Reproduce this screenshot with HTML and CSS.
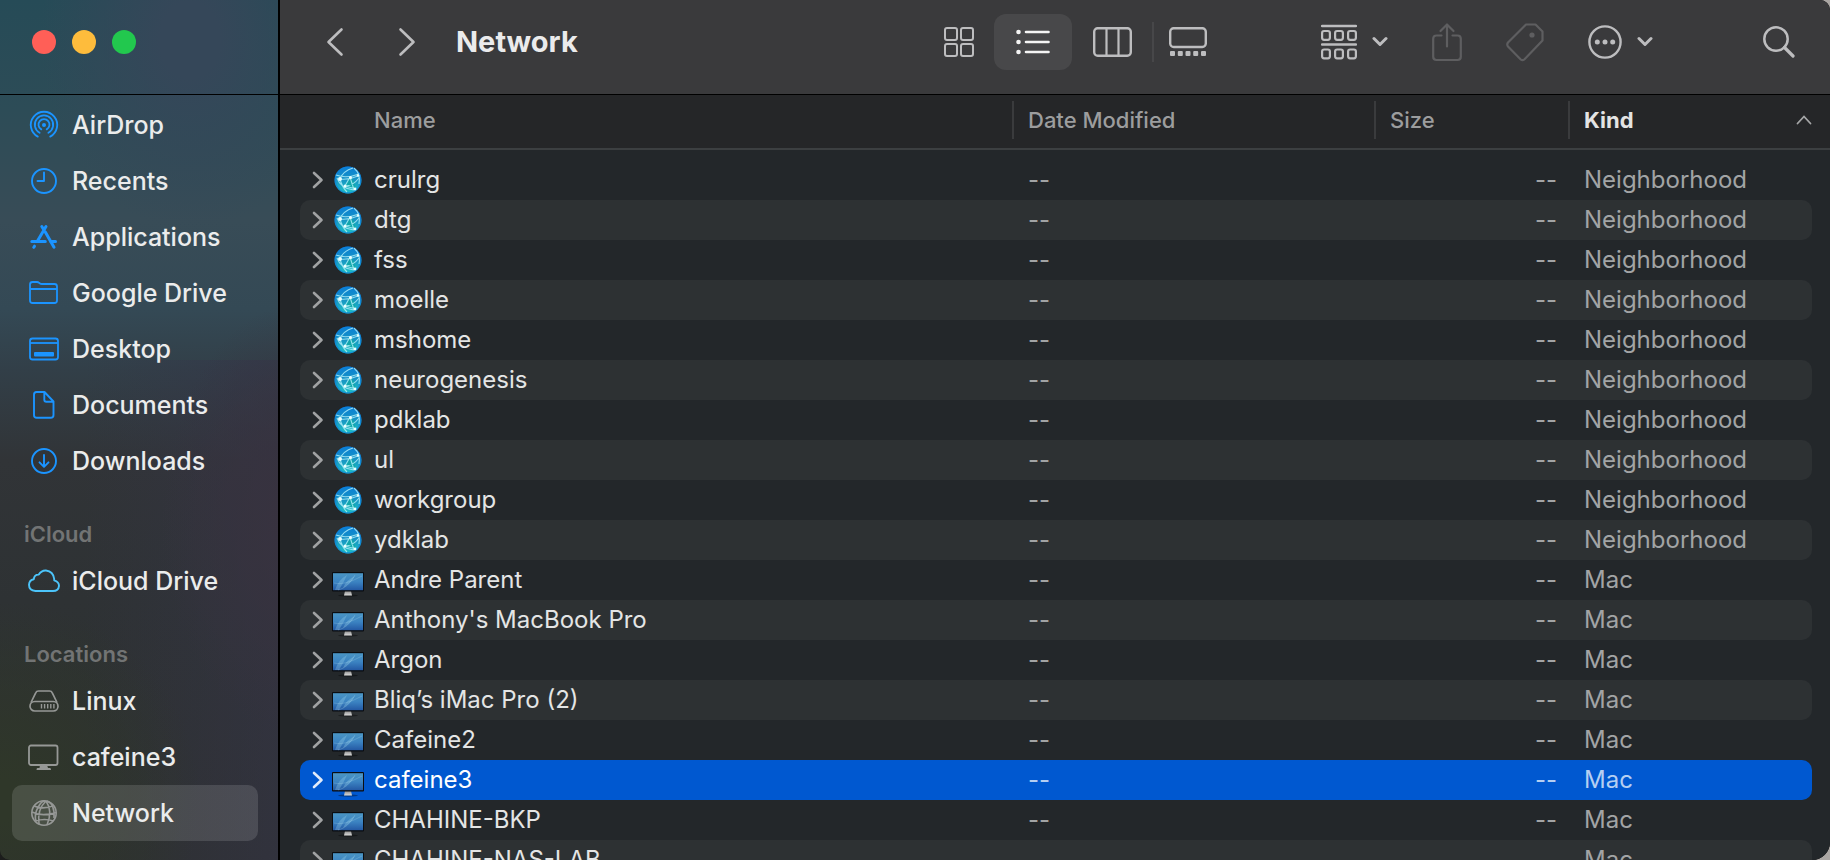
FILE: index.html
```html
<!DOCTYPE html>
<html lang="en">
<head>
<meta charset="utf-8">
<title>Network</title>
<link rel="stylesheet" href="styles.css">
</head>
<body>
<svg class="defs" width="0" height="0" aria-hidden="true">
  <defs>
    <linearGradient id="globe-fill" x1="0" y1="0" x2="0" y2="1"><stop offset="0" stop-color="#0a7fd6"/><stop offset=".5" stop-color="#1795c4"/><stop offset="1" stop-color="#1fc4c4"/></linearGradient>
    <linearGradient id="screen-fill" x1="0" y1="0" x2="0" y2="1"><stop offset="0" stop-color="#4a95c4"/><stop offset=".5" stop-color="#3c84c2"/><stop offset="1" stop-color="#2459a4"/></linearGradient>
    <linearGradient id="stand-fill" x1="0" y1="0" x2="0" y2="1"><stop offset="0" stop-color="#8d8d8d"/><stop offset="1" stop-color="#dcdcdc"/></linearGradient>
    <symbol id="chevron" viewBox="0 0 12 18"><path d="M2 2l7.5 7L2 16" fill="none" stroke="currentColor" stroke-width="2.6" stroke-linecap="round" stroke-linejoin="round"/></symbol>
    <symbol id="down" viewBox="0 0 16 11"><path d="M2 2.5l6 6 6-6" fill="none" stroke="currentColor" stroke-width="3" stroke-linecap="round" stroke-linejoin="round"/></symbol>
    <symbol id="globe" viewBox="0 0 28 28">
      <circle cx="14" cy="14" r="13.5" fill="url(#globe-fill)"/>
      <path d="M16 11l-5 9 11 3-2-8z" fill="#0fa9a4" opacity=".7"/>
      <circle cx="14" cy="14" r="12.8" fill="none" stroke="#0d7fe0" stroke-opacity=".7" stroke-width="1.2"/>
      <g fill="none" stroke="#b5f3fb" stroke-width="1.1" stroke-opacity=".8"><path d="M2 9q10 4 23-1M6 13q9 1 18-3M6 13Q9 5 19 2M6 13q2 8 7 13M16 11l-5 9 11 3M16 11l4 13M11 20q8 0 14-8M20 2q7 6 5 16M3 12q4 11 17 12"/></g>
      <g fill="#e8ffff"><circle cx="6" cy="13" r="2"/><circle cx="16.500" cy="11.500" r="1.500"/><circle cx="11" cy="20" r="1.500"/><circle cx="21" cy="23" r="1.400"/><circle cx="24" cy="9.500" r="1.200"/></g>
    </symbol>
    <symbol id="mac" viewBox="0 -9 32 34">
      <ellipse cx="16" cy="23.500" rx="10" ry="1.200" fill="#000" opacity=".35"/>
      <path d="M13 19h6l1 4.500h-8z" fill="url(#stand-fill)"/>
      <rect width="32" height="19.500" rx="1" fill="#0b0d10"/>
      <rect x="1" y="1.200" width="30" height="17" fill="url(#screen-fill)"/>
      <path d="M3 18Q6 8 15 3q-3 7-8 15zM11 16q3-8 12-12-4 7-12 12z" fill="#9fd8ee" opacity=".3"/>
      <path d="M2 11q10 3 28-7M6 18q10-2 17-15" fill="none" stroke="#b3e0f0" stroke-width=".8" opacity=".3"/>
    </symbol>
  </defs>
</svg>
<div class="window">
  <aside class="sidebar">
    <div class="lights">
      <button class="light close" aria-label="Close"></button>
      <button class="light minimize" aria-label="Minimize"></button>
      <button class="light expand" aria-label="Zoom"></button>
    </div>
    <nav class="places">
      <a class="place" href="#"><svg class="glyph" viewBox="0 0 32 32"><g fill="none" stroke="currentColor" stroke-width="1.8" stroke-linecap="round"><path d="M9.800 27.600a13.200 13.200 0 1 1 12.400 0"/><path d="M11.600 23.700a9.200 9.200 0 1 1 8.800 0"/><path d="M13.300 20.400a5.500 5.500 0 1 1 5.400 0"/></g><circle cx="16" cy="16" r="2" fill="currentColor"/></svg>AirDrop</a>
      <a class="place" href="#"><svg class="glyph" viewBox="0 0 32 32"><g fill="none" stroke="currentColor" stroke-width="1.900" stroke-linecap="round" stroke-linejoin="round"><circle cx="16" cy="16" r="12"/><path d="M16 7.500V16H9.500"/></g></svg>Recents</a>
      <a class="place" href="#"><svg class="glyph" viewBox="0 0 32 32"><g fill="none" stroke="currentColor" stroke-width="3" stroke-linecap="round" stroke-linejoin="round"><path d="M18 5.500L9.800 19.500M3.800 20.500h13.500M13.800 5.500l1.800 3M17.300 11l8.700 15.300M22.500 20.500h5M6.500 25.200l-.7 1.100"/></g></svg>Applications</a>
      <a class="place" href="#"><svg class="glyph" viewBox="0 0 32 32"><g fill="none" stroke="currentColor" stroke-width="1.800" stroke-linejoin="round"><path d="M2 7.500Q2 5 4.500 5H9q1.200 0 2 .8l1 .7q.6.500 1.800.5h12.700Q29 7 29 9.500v14q0 2.500-2.500 2.500h-22Q2 26 2 23.500zM2 12h27"/></g></svg>Google Drive</a>
      <a class="place" href="#"><svg class="glyph" viewBox="0 0 32 32"><rect x="2" y="5.500" width="28" height="21" rx="2.500" fill="none" stroke="currentColor" stroke-width="1.800"/><path d="M2 10h28" stroke="currentColor" stroke-width="1.800"/><rect x="6" y="19" width="20" height="4.500" rx="1" fill="currentColor"/></svg>Desktop</a>
      <a class="place" href="#"><svg class="glyph" viewBox="0 0 32 32"><path d="M8.500 3h8L25.500 12.500V26q0 2.800-2.800 2.800H8.700Q6 28.800 6 26V5.700Q6 3 8.500 3zM16.300 3v7.800q0 2 2 2h7" fill="none" stroke="currentColor" stroke-width="1.900" stroke-linejoin="round"/></svg>Documents</a>
      <a class="place" href="#"><svg class="glyph" viewBox="0 0 32 32"><g fill="none" stroke="currentColor" stroke-width="1.900" stroke-linecap="round" stroke-linejoin="round"><circle cx="16" cy="16" r="12"/><path d="M16 10v11.500M11.500 17.300l4.500 4.500 4.500-4.500"/></g></svg>Downloads</a>
      <h2 class="section">iCloud</h2>
      <a class="place cloud" href="#"><svg class="glyph" viewBox="0 0 32 32"><path d="M7.500 26Q1 25.500 1 19.800q.3-4.800 4.800-5.500Q6 9.500 10.800 9.600q2.700-4.400 7.200-4.100 7.200.8 8.200 8.500v1.300Q31 16.800 31 20.800 30.500 26 25 26z" fill="none" stroke="currentColor" stroke-width="1.900" stroke-linejoin="round"/></svg>iCloud Drive</a>
      <h2 class="section">Locations</h2>
      <a class="place device" href="#"><svg class="glyph" viewBox="0 0 32 32"><g fill="none" stroke="currentColor" stroke-width="1.700"><path d="M3 17.500L7.700 7.800Q8.500 6 10.500 6h11q2 0 2.800 1.800L29 17.500"/><rect x="2" y="16.500" width="28" height="9.500" rx="4.700"/><path d="M13.500 19v4.500M16.600 19v4.500M19.700 19v4.500M22.800 19v4.500M25.900 19v4.500" stroke-width="1.400"/></g></svg>Linux</a>
      <a class="place device" href="#"><svg class="glyph" viewBox="0 0 32 32"><rect x="1" y="4.500" width="28.500" height="19.500" rx="2" fill="none" stroke="currentColor" stroke-width="1.800"/><path d="M12 24h7l1 3h2q1 0 1 2H8.500q0-2 1-2h2z" fill="currentColor"/></svg>cafeine3</a>
      <a class="place device current" href="#" aria-current="page"><svg class="glyph" viewBox="0 0 32 32"><g fill="none" stroke="currentColor" stroke-width="1.600"><circle cx="16" cy="16" r="12.200"/><path d="M18 4Q9 12 11 27.500M18 4q7 10 1 24M17 4q-3-1-7 6.500Q6 17 8 24M19 4q8 3 7 17M6 9q9 4 20-.5M4 15q10 5 24 .5M7.500 24q9-3 18 0"/></g></svg>Network</a>
    </nav>
  </aside>
  <main class="main">
    <header class="toolbar">
      <div class="history">
        <button class="tool" aria-label="Back"><svg width="18" height="30" viewBox="0 0 18 30"><path d="M15.500 2.500L2.500 15l13 12.500" fill="none" stroke="currentColor" stroke-width="2.600" stroke-linecap="round" stroke-linejoin="round"/></svg></button>
        <button class="tool" aria-label="Forward"><svg width="18" height="30" viewBox="0 0 18 30"><path d="M2.500 2.500L15.500 15l-13 12.500" fill="none" stroke="currentColor" stroke-width="2.600" stroke-linecap="round" stroke-linejoin="round"/></svg></button>
      </div>
      <h1 class="title">Network</h1>
      <div class="views">
        <button class="view icons" aria-label="Icons"><svg width="30" height="30" viewBox="0 0 30 30"><g fill="none" stroke="currentColor" stroke-width="2"><rect x="1" y="1" width="12" height="12" rx="2"/><rect x="17" y="1" width="12" height="12" rx="2"/><rect x="1" y="17" width="12" height="12" rx="2"/><rect x="17" y="17" width="12" height="12" rx="2"/></g></svg></button>
        <button class="view active" aria-label="List" aria-pressed="true"><svg width="34" height="26" viewBox="0 0 34 26"><g fill="currentColor"><circle cx="2.500" cy="3" r="2.300"/><circle cx="2.500" cy="13" r="2.300"/><circle cx="2.500" cy="23" r="2.300"/></g><path d="M10 3h22.500M10 13h22.500M10 23h22.500" stroke="currentColor" stroke-width="2.600" stroke-linecap="round"/></svg></button>
        <button class="view" aria-label="Columns"><svg width="39" height="30" viewBox="0 0 39 30"><rect x="1.200" y="1.200" width="36.600" height="27.600" rx="3.500" fill="none" stroke="currentColor" stroke-width="2.400"/><path d="M13.500 1v28M25.500 1v28" stroke="currentColor" stroke-width="2.200"/></svg></button>
        <button class="view gallery" aria-label="Gallery"><svg width="38" height="30" viewBox="0 0 38 30"><rect x="1.200" y="1.200" width="35.600" height="18.800" rx="3.500" fill="none" stroke="currentColor" stroke-width="2.400"/><g fill="currentColor"><rect x="1" y="24" width="5" height="5" rx="1"/><rect x="8.800" y="24" width="5" height="5" rx="1"/><rect x="16.500" y="24" width="5" height="5" rx="1"/><rect x="24.200" y="24" width="5" height="5" rx="1"/><rect x="32" y="24" width="5" height="5" rx="1"/></g></svg></button>
      </div>
      <div class="actions">
        <button class="tool menu" aria-label="Group"><svg width="36" height="36" viewBox="0 0 36 36"><path d="M1 2h34M1 20.500h34" stroke="currentColor" stroke-width="2.400" stroke-linecap="round"/><g fill="none" stroke="currentColor" stroke-width="2.200"><rect x="1.100" y="7" width="7.800" height="8.800" rx="2"/><rect x="14.100" y="7" width="7.800" height="8.800" rx="2"/><rect x="27.100" y="7" width="7.800" height="8.800" rx="2"/><rect x="1.100" y="25.500" width="7.800" height="8.800" rx="2"/><rect x="14.100" y="25.500" width="7.800" height="8.800" rx="2"/><rect x="27.100" y="25.500" width="7.800" height="8.800" rx="2"/></g></svg><svg width="16" height="11"><use href="#down"/></svg></button>
        <button class="tool" aria-label="Share" disabled><svg width="30" height="40" viewBox="0 0 30 40"><g fill="none" stroke="currentColor" stroke-width="2.200" stroke-linecap="round" stroke-linejoin="round"><path d="M9.500 13.500h-5q-3.300 0-3.300 3.300v18q0 3.200 3.300 3.200h21q3.300 0 3.300-3.200v-18q0-3.300-3.300-3.300h-5M15 24.500V3M8.500 9L15 2.500 21.500 9"/></g></svg></button>
        <button class="tool" aria-label="Tags" disabled><svg width="38" height="40" viewBox="0 0 38 40"><path d="M20 2.500h9.500L36.500 9.500v9L18.500 37.300q-2 1.800-4 0L2 24.500q-1.500-2 0-4z" fill="none" stroke="currentColor" stroke-width="2.200" stroke-linejoin="round"/><circle cx="26" cy="13" r="2.600" fill="currentColor"/></svg></button>
        <button class="tool menu" aria-label="More"><svg width="34" height="34" viewBox="0 0 34 34"><circle cx="17" cy="17" r="15.600" fill="none" stroke="currentColor" stroke-width="2.400"/><g fill="currentColor"><circle cx="9.300" cy="17" r="2.500"/><circle cx="17" cy="17" r="2.500"/><circle cx="24.700" cy="17" r="2.500"/></g></svg><svg width="16" height="11"><use href="#down"/></svg></button>
      </div>
      <button class="tool search" aria-label="Search"><svg width="32" height="32" viewBox="0 0 32 32"><g fill="none" stroke="currentColor" stroke-linecap="round"><circle cx="13" cy="13" r="11.700" stroke-width="2.500"/><path d="M21.500 21.500l8.500 8.500" stroke-width="3.200"/></g></svg></button>
    </header>
    <div class="files">
      <table class="list">
        <colgroup><col><col class="col-date"><col class="col-size"><col class="col-kind"></colgroup>
        <thead>
          <tr>
            <th class="name" scope="col"><span class="label">Name</span></th>
            <th scope="col"><span class="label">Date Modified</span></th>
            <th scope="col"><span class="label">Size</span></th>
            <th scope="col" aria-sort="ascending"><span class="label sorted">Kind<svg width="16" height="10" viewBox="0 0 16 10"><path d="M1.500 8.500L8 1.500l6.500 7" fill="none" stroke="#a5a6a7" stroke-width="1.800" stroke-linecap="round"/></svg></span></th>
          </tr>
        </thead>
        <tbody id="rows"></tbody>
      </table>
    </div>
  </main>
</div>
<script src="list.js"></script>
</body>
</html>
```
FILE: list.js
```js
const neighborhoods = ["crulrg", "dtg", "fss", "moelle", "mshome", "neurogenesis", "pdklab", "ul", "workgroup", "ydklab"];
const macs = ["Andre Parent", "Anthony's MacBook Pro", "Argon", "Bliq’s iMac Pro (2)", "Cafeine2", "cafeine3", "CHAHINE-BKP", "CHAHINE-NAS-LAB"];
const selected = "cafeine3";

const row = (name, icon, kind) => `
  <tr class="${name === selected ? "selected" : ""}">
    <td><div class="entry">
      <button class="disclose" aria-label="Expand ${name}"><svg width="12" height="18"><use href="#chevron"/></svg></button>
      <svg class="icon ${icon}"><use href="#${icon}"/></svg>
      <span>${name}</span>
    </div></td>
    <td>--</td>
    <td class="size">--</td>
    <td>${kind}</td>
  </tr>`;

document.getElementById("rows").innerHTML =
  neighborhoods.map((n) => row(n, "globe", "Neighborhood")).join("") +
  macs.map((n) => row(n, "mac", "Mac")).join("");
```
FILE: styles.css
```css
* { box-sizing: border-box; }

body {
  margin: 0;
  background: linear-gradient(90deg, #1c1d1c 50%, #aaa6a3 50%);
  color: #dfe0e0;
  font-family: Inter, "Liberation Sans", sans-serif;
  font-size: 24px;
}

button {
  padding: 0;
  border: 0;
  background: none;
  color: inherit;
  font: inherit;
}

svg { display: block; flex: none; }
.defs { position: absolute; }

.window {
  display: flex;
  height: 100vh;
  overflow: hidden;
  border-radius: 0 10px 18px 10px;
  background: #000;
}

.sidebar {
  flex: none;
  width: 280px;
  border-right: 2px solid #000;
  background:
    radial-gradient(ellipse 150px 190px at 190px 40px, #354759 20%, transparent),
    radial-gradient(ellipse 150px 220px at 310px 520px, #38323f 10%, transparent),
    radial-gradient(ellipse 200px 200px at 0 800px, #2f3729 10%, transparent),
    linear-gradient(90deg, transparent 30%, #35344988 100%) 0 360px / 100% 500px no-repeat,
    linear-gradient(#264b57 0, #2d4c57 110px, #384c57 220px, #344955 310px, #323f48 370px, #313437 460px, #2e3234 600px, #2d302f 100%);
}

.lights {
  display: flex;
  align-items: center;
  gap: 16px;
  height: 95px;
  padding: 0 32px 11px;
  border-bottom: 1px solid #000;
}

.light { width: 24px; height: 24px; border-radius: 50%; }
.close { background: #ff5f57; }
.minimize { background: #febc3c; }
.expand { background: #22c84e; }

.places { padding: 2px 20px 0 12px; }

.place {
  display: flex;
  align-items: center;
  gap: 12px;
  height: 56px;
  padding-left: 16px;
  border-radius: 10px;
  color: #ebecec;
  font-size: 25px;
  font-weight: 500;
  text-decoration: none;
}

.glyph { width: 32px; height: 32px; color: #1b94ff; }
.cloud .glyph { color: #4cc4fa; }
.device .glyph { color: #969896; }
.current { background: rgba(255, 255, 255, 0.13); }

.section {
  margin: 0;
  padding: 30px 12px 4px;
  color: #727474;
  font-size: 22px;
  font-weight: 600;
  line-height: 30px;
}

.main {
  display: flex;
  flex: 1;
  flex-direction: column;
  min-width: 0;
}

.toolbar {
  display: flex;
  flex: none;
  align-items: center;
  height: 95px;
  padding: 0 35px 11px 46px;
  border-bottom: 1px solid #000;
  background: #3a3a3c;
  color: #bdbdbf;
}

.history { display: flex; gap: 54px; }

.title {
  flex: 1;
  margin: 0 0 0 40px;
  color: #ebebec;
  font-size: 29px;
  font-weight: 700;
  line-height: 34px;
}

.views { display: flex; align-items: center; }

.view {
  display: flex;
  align-items: center;
  justify-content: center;
  width: 80px;
  height: 56px;
}

.icons { width: 70px; }

.active {
  width: 78px;
  border-radius: 12px;
  background: #48484a;
  color: #f5f5f5;
}

.gallery {
  width: 70px;
  height: 40px;
  border-left: 2px solid #474749;
}

.actions {
  display: flex;
  align-items: center;
  gap: 44px;
  margin: 0 110px 0 99px;
}

.tool:disabled { color: #5e5e60; }
.menu { display: flex; align-items: center; gap: 15px; }

.files {
  flex: 1;
  min-height: 0;
  overflow: hidden;
  padding: 0 18px 0 20px;
  background: linear-gradient(#252628 53px, #3c3f41 53px, #3c3f41 55px, #23272a 55px);
}

.list {
  width: 100%;
  border-spacing: 0;
  table-layout: fixed;
}

.col-date { width: 362px; }
.col-size { width: 194px; }
.col-kind { width: 244px; }

th {
  height: 65px;
  padding: 6px 0 21px;
  color: #9c9d9e;
  font-size: 22px;
  font-weight: 500;
  text-align: left;
}

.label {
  display: flex;
  align-items: center;
  height: 38px;
  padding-left: 14px;
  border-left: 2px solid #3a3b3d;
}

.name .label { padding-left: 74px; border-left: 0; }

.sorted {
  justify-content: space-between;
  color: #e4e4e4;
  font-weight: 700;
}

td {
  height: 40px;
  padding: 0 0 0 16px;
  color: #a2a4a5;
  line-height: 28px;
  white-space: nowrap;
}

td:first-child { padding-left: 12px; border-radius: 10px 0 0 10px; color: #e4e5e5; }
td:last-child { border-radius: 0 10px 10px 0; }
.size { padding-right: 11px; text-align: right; }
tr:nth-child(even) td { background: #2d3133; }
.list .selected td { background: #0058d0; color: #b5cff2; }
.list .selected td:first-child { color: #fff; }

.entry {
  display: grid;
  grid-template-columns: 12px 32px 1fr;
  align-items: center;
  column-gap: 8px;
}

.entry span { padding-left: 2px; }
.disclose { color: #a0a2a3; }
.selected .disclose { color: #e0ebfa; }
.icon { justify-self: center; }
.globe { width: 28px; height: 28px; }
.mac { width: 32px; height: 34px; }
```
